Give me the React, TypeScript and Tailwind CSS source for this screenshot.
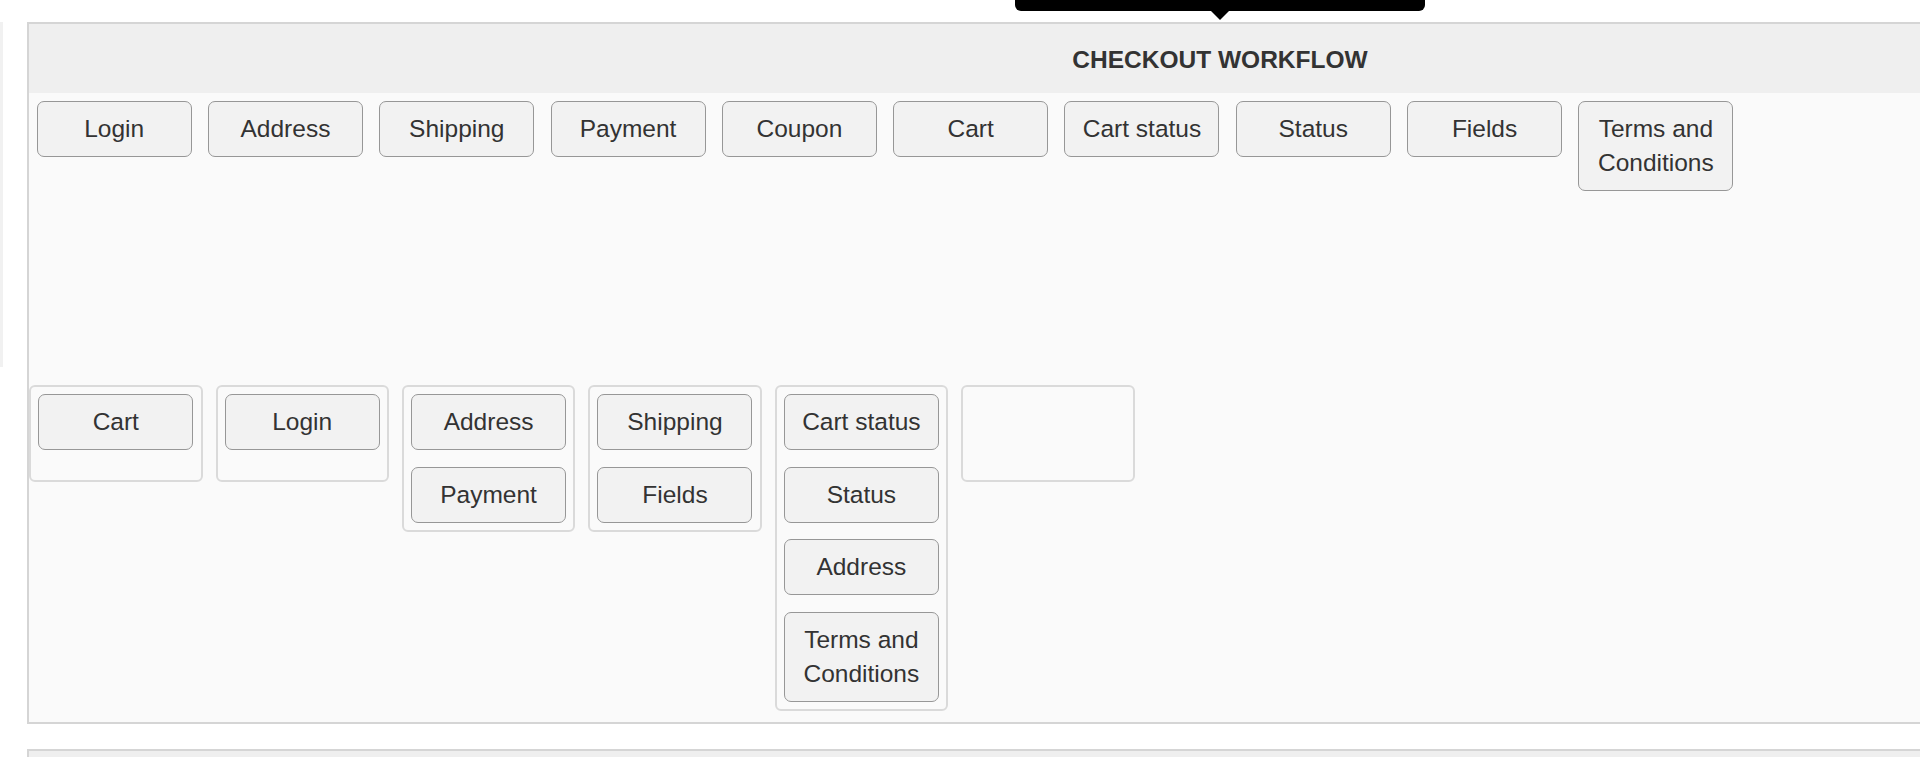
import React from "react";

const palette = [
  "Login",
  "Address",
  "Shipping",
  "Payment",
  "Coupon",
  "Cart",
  "Cart status",
  "Status",
  "Fields",
  "Terms and Conditions",
];

const steps: string[][] = [
  ["Cart"],
  ["Login"],
  ["Address", "Payment"],
  ["Shipping", "Fields"],
  ["Cart status", "Status", "Address", "Terms and Conditions"],
  [],
];

function StepButton({ label }: { label: string }) {
  return (
    <div className="w-[155px] shrink-0 rounded-[7px] border border-[#979797] bg-[#f2f2f2] px-[8px] py-[10px] text-center text-[24.5px] leading-[34px] text-[#333333]">
      {label}
    </div>
  );
}

export default function App() {
  return (
    <div className="relative h-[757px] w-[1920px] overflow-hidden bg-white font-['Liberation_Sans',Arial,sans-serif]">
      {/* edge of the side drawer */}
      <div className="absolute left-0 top-[22px] h-[345px] w-[3px] bg-[#f1f1f1]" />

      <div className="ml-[27px] mt-[22px] w-[2386px] border-2 border-[#d5d5d5] bg-[#fafafa]">
        <div className="flex h-[69px] items-center justify-center bg-[#efefef] pt-[3px] text-[24.5px] font-bold text-[#333333]">
          CHECKOUT WORKFLOW
        </div>

        {/* available steps */}
        <div className="flex h-[292px] items-start gap-[16.3px] pl-[7.7px] pt-[8px]">
          {palette.map((p) => (
            <StepButton key={p} label={p} />
          ))}
        </div>

        {/* workflow columns */}
        <div className="flex items-start gap-[13px] pb-[10.6px] pl-[0.3px]">
          {steps.map((col, i) => (
            <div
              key={i}
              className="flex min-h-[97px] w-[173.4px] flex-col gap-[16.7px] rounded-[6px] border-2 border-[#dadada] bg-[#fafafa] p-[7px]"
            >
              {col.map((s, j) => (
                <StepButton key={j} label={s} />
              ))}
            </div>
          ))}
        </div>
      </div>

      <div className="ml-[27px] mt-[25px] h-[100px] w-[2386px] border-2 border-[#d5d5d5] bg-[#efefef]" />

      {/* tooltip */}
      <div className="absolute left-[1015px] top-[-30px] h-[41px] w-[410px] rounded-b-[6px] bg-black">
        <div className="absolute left-1/2 top-full h-0 w-0 -translate-x-1/2 border-l-[9px] border-r-[9px] border-t-[9px] border-l-transparent border-r-transparent border-t-black" />
      </div>
    </div>
  );
}
